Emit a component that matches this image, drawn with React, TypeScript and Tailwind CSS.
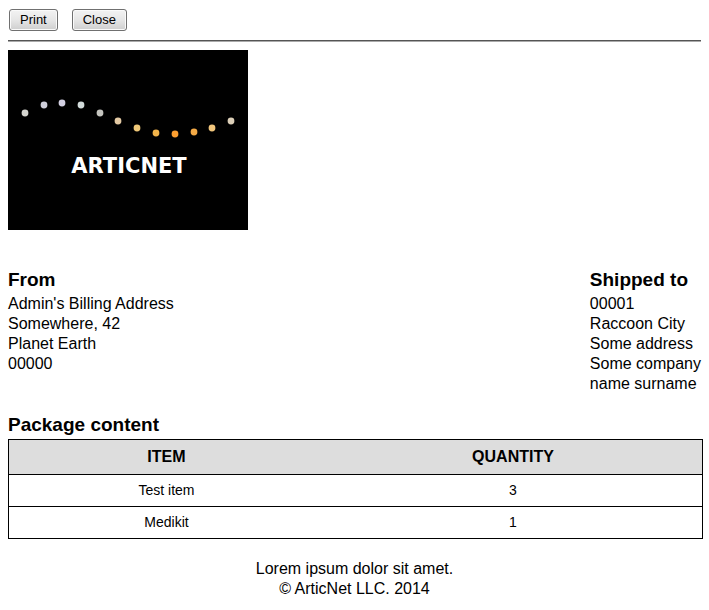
const dots = [
  { x: 17, y: 63, fill: '#d6d6d0' },
  { x: 36, y: 55, fill: '#cfcfdb' },
  { x: 54, y: 53, fill: '#d3d0e2' },
  { x: 73, y: 55, fill: '#d3dcdb' },
  { x: 92, y: 63, fill: '#c5c5bf' },
  { x: 110, y: 71, fill: '#e4caa4' },
  { x: 129, y: 78, fill: '#f0c878' },
  { x: 148, y: 83, fill: '#f2b44a' },
  { x: 167, y: 84, fill: '#fd9f30' },
  { x: 186, y: 82, fill: '#f4aa46' },
  { x: 204, y: 78, fill: '#f1c67c' },
  { x: 223, y: 71, fill: '#dccfb8' },
];

const items = [
  { name: 'Test item', quantity: 3 },
  { name: 'Medikit', quantity: 1 },
];

function ToolButton({ label, onClick }: { label: string; onClick: () => void }) {
  return (
    <button
      type="button"
      onClick={onClick}
      className="h-[22px] rounded-[3px] border border-[#707070] bg-linear-to-b from-[#f3f3f3] via-[#e6e6e6] to-[#cecece] px-[10px] text-[13px] leading-[20px] shadow-[inset_0_0_0_1px_#fafafa]"
    >
      {label}
    </button>
  );
}

function Logo() {
  return (
    <svg width="240" height="180" viewBox="0 0 240 180" role="img" aria-label="ArticNet" className="block">
      <rect width="240" height="180" fill="#000" />
      {dots.map((dot) => (
        <circle key={dot.x} cx={dot.x} cy={dot.y} r="3.4" fill={dot.fill} />
      ))}
      <text
        x="121"
        y="123"
        textAnchor="middle"
        fill="#fff"
        className="font-['DejaVu_Sans',sans-serif] text-[21px] font-bold"
      >
        ARTICNET
      </text>
    </svg>
  );
}

function Address({ title, lines }: { title: string; lines: string[] }) {
  return (
    <section>
      <h2 className="text-[19px] leading-[24px] font-bold">{title}</h2>
      <address className="mt-[2px] leading-[20px] not-italic">
        {lines.map((line) => (
          <div key={line}>{line}</div>
        ))}
      </address>
    </section>
  );
}

export default function App() {
  return (
    <main className="bg-white pt-[9px] pr-2 pb-3 pl-2 font-['Liberation_Sans',Arial,sans-serif] text-[16px] text-black">
      <div className="flex gap-[14px] pl-px">
        <ToolButton label="Print" onClick={() => window.print()} />
        <ToolButton label="Close" onClick={() => window.close()} />
      </div>
      <hr className="mt-[9px] mb-2 h-[2px] border-t border-b border-t-[#555555] border-b-[#aaaaaa]" />
      <Logo />
      <div className="mt-[38px] flex justify-between">
        <Address title="From" lines={["Admin's Billing Address", 'Somewhere, 42', 'Planet Earth', '00000']} />
        <Address
          title="Shipped to"
          lines={['00001', 'Raccoon City', 'Some address', 'Some company', 'name surname']}
        />
      </div>
      <section className="-mr-[2px] mt-[19px]">
        <h2 className="text-[19px] leading-[24px] font-bold">Package content</h2>
        <table className="mt-[2px] w-full table-fixed border-collapse border border-black text-center">
          <thead>
            <tr className="h-[35px] border-b border-black bg-[#dddddd]">
              <th scope="col" className="w-5/11">ITEM</th>
              <th scope="col">QUANTITY</th>
            </tr>
          </thead>
          <tbody className="text-[14px]">
            {items.map((item) => (
              <tr key={item.name} className="h-[32px] border-b border-black">
                <td>{item.name}</td>
                <td>{item.quantity}</td>
              </tr>
            ))}
          </tbody>
        </table>
      </section>
      <footer className="mt-5 text-center leading-[20px]">
        <p>Lorem ipsum dolor sit amet.</p>
        <p>© ArticNet LLC. 2014</p>
      </footer>
    </main>
  );
}
